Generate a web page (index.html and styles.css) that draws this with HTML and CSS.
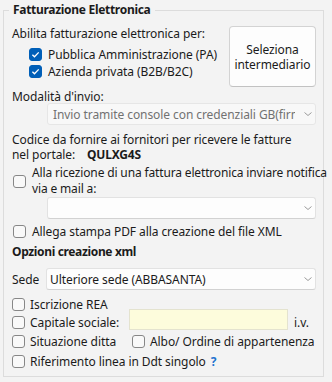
FILE: index.html
```html
<!DOCTYPE html>
<html lang="it">
<head>
  <meta charset="UTF-8" />
  <title>Fatturazione Elettronica</title>
  <link rel="stylesheet" href="styles.css">
</head>
<body>
  <fieldset class="group">
    <legend>Fatturazione Elettronica</legend>

    <div class="top">
      <div class="abilita">
        <div class="line">Abilita fatturazione elettronica per:</div>
        <label class="chk indent first"><span class="box on"><svg viewBox="0 0 13 13"><path d="M3.4 6.7l2.1 2.1 4.2-4.4" /></svg></span>Pubblica Amministrazione (PA)</label>
        <label class="chk indent"><span class="box on"><svg viewBox="0 0 13 13"><path d="M3.4 6.7l2.1 2.1 4.2-4.4" /></svg></span>Azienda privata (B2B/B2C)</label>
      </div>
      <button class="btn">Seleziona<br>intermediario</button>
    </div>

    <div class="modalita">Modalità d'invio:</div>
    <div class="select disabled">
      <span class="sel-text">Invio tramite console con credenziali GB(firma digitale)</span>
      <svg class="chev" viewBox="0 0 8 4"><path d="M0.5 0.5l3.5 3 3.5-3" /></svg>
    </div>

    <div class="codice">
      <div>Codice da fornire ai fornitori per ricevere le fatture</div>
      <div><span class="portale">nel portale:</span><b>QULXG4S</b></div>
    </div>

    <label class="chk two">
      <span class="box"></span>
      <span class="two-text">Alla ricezione di una fattura elettronica inviare notifica<br>via e mail a:</span>
    </label>
    <div class="select mail">
      <span class="sel-text"></span>
      <svg class="chev" viewBox="0 0 8 4"><path d="M0.5 0.5l3.5 3 3.5-3" /></svg>
    </div>

    <label class="chk pdf"><span class="box"></span>Allega stampa PDF alla creazione del file XML</label>

    <div class="subtitle">Opzioni creazione xml</div>

    <div class="sede">
      <span class="sede-label">Sede</span>
      <div class="select">
        <span class="sel-text">Ulteriore sede (ABBASANTA)</span>
        <svg class="chev" viewBox="0 0 8 4"><path d="M0.5 0.5l3.5 3 3.5-3" /></svg>
      </div>
    </div>

    <div class="opzioni">
      <label class="chk rea"><span class="box"></span>Iscrizione REA</label>
      <div class="row capitale">
        <label class="chk"><span class="box"></span>Capitale sociale:</label>
        <div class="input-yellow"></div>
        <span class="iv">i.v.</span>
      </div>
      <div class="row situazione-row">
        <label class="chk situazione"><span class="box"></span>Situazione ditta</label>
        <label class="chk"><span class="box"></span>Albo/ Ordine di appartenenza</label>
      </div>
      <label class="chk riferimento"><span class="box"></span>Riferimento linea in Ddt singolo <span class="help">?</span></label>
    </div>
  </fieldset>
</body>
</html>
```

FILE: styles.css
```css
* {
  box-sizing: border-box;
}

body {
  margin: 0;
  background-color: #f3f3f3;
  color: #1b1b1b;
  font-family: "Noto Sans", sans-serif;
  font-size: 12px;
  letter-spacing: -0.08px;
  width: 332px;
  height: 382px;
  overflow: hidden;
}

b {
  letter-spacing: -0.2px;
}

.group {
  margin: 3px 0 0 3px;
  width: 321px;
  height: 374px;
  min-width: 0;
  padding: 0 7px 0 8px;
  border: 1px solid #dcdcdc;
}

.group legend {
  font-weight: bold;
  letter-spacing: -0.3px;
  padding: 0 5px 0 4px;
  margin-left: -3px;
  line-height: 14px;
}

.line {
  line-height: 16px;
}

.top {
  display: flex;
  justify-content: space-between;
  align-items: flex-start;
  height: 63px;
}

.abilita {
  padding-top: 9px;
}

.chk {
  display: flex;
  align-items: center;
  gap: 5px;
  line-height: 17px;
  white-space: nowrap;
}

.indent {
  margin-left: 17px;
  gap: 6px;
}

.first {
  margin-top: 4px;
}

.box {
  width: 13px;
  height: 13px;
  border: 1px solid #878787;
  border-radius: 3px;
  background: #f9f9f9;
  flex-shrink: 0;
  display: flex;
}

.box.on {
  background: #005fb8;
  border-color: #005fb8;
}

.box svg {
  width: 13px;
  height: 13px;
  margin: -1px;
  fill: none;
  stroke: #fff;
  stroke-width: 1.3;
}

.btn {
  margin-top: 9px;
  width: 87px;
  height: 61px;
  background: #fdfdfd;
  border: 1px solid #d3d3d3;
  border-bottom-color: #c2c2c2;
  border-radius: 4px;
  font-family: inherit;
  font-size: 12px;
  letter-spacing: -0.08px;
  line-height: 15px;
  color: #1b1b1b;
  padding: 0;
}

.modalita {
  margin-top: 10px;
  line-height: 14px;
}

.select {
  display: flex;
  align-items: center;
  justify-content: space-between;
  height: 22px;
  min-width: 0;
  border: 1px solid #e2e2e2;
  border-bottom-color: #d2d2d2;
  border-radius: 3px;
  background: #fdfdfd;
  padding: 0 3px 0 5px;
}

.select.disabled {
  margin: -1px 0 0 35px;
  background: #f8f8f8;
  border-color: #e6e6e6;
  color: #727272;
}

.sel-text {
  white-space: nowrap;
  overflow: hidden;
  flex: 1;
  min-width: 0;
  margin-right: 9px;
}

.chev {
  width: 8px;
  height: 4px;
  flex-shrink: 0;
  fill: none;
  stroke: #9a9a9a;
  stroke-width: 1;
}

.codice {
  margin-top: 7px;
  line-height: 15px;
}

.portale {
  display: inline-block;
  width: 75px;
}

.two {
  margin: 3px 0 0 1px;
  gap: 6px;
  line-height: 16px;
}

.two-text {
  letter-spacing: -0.15px;
}

.select.mail {
  margin: 0 0 0 35px;
}

.pdf {
  margin: 4px 0 0 1px;
  gap: 6px;
}

.subtitle {
  font-weight: bold;
  letter-spacing: -0.35px;
  margin-top: 4px;
  line-height: 16px;
}

.sede {
  display: flex;
  align-items: center;
  margin-top: 8px;
}

.sede-label {
  width: 34px;
  flex-shrink: 0;
}

.sede .select {
  flex: 1;
  padding-left: 3px;
}

.rea {
  margin-top: 6px;
}

.row {
  display: flex;
  align-items: center;
}

.capitale {
  margin-top: -4px;
  align-items: flex-end;
}

.capitale .chk {
  width: 117px;
  margin-bottom: -1px;
}

.input-yellow {
  width: 159px;
  height: 21px;
  background: #fdfcdc;
  border: 1px solid #e4e3cf;
  margin-right: 6px;
}

.iv {
  line-height: 17px;
  margin-bottom: -1px;
}

.situazione-row {
  margin-top: 3px;
}

.situazione {
  width: 120px;
}

.riferimento {
  margin-top: 3px;
}

.help {
  color: #1e73cf;
  font-weight: bold;
}
```
